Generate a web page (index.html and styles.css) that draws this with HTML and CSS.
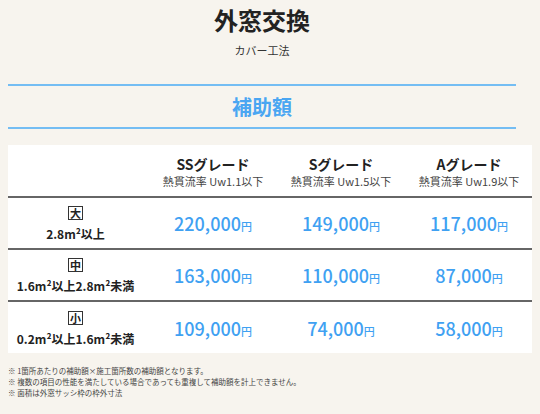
FILE: index.html
```html
<!DOCTYPE html>
<html lang="ja">
<head>
<meta charset="utf-8">
<title>外窓交換</title>
<link rel="stylesheet" href="styles.css">
</head>
<body>
<div class="page">
  <h1 class="title">外窓交換</h1>
  <p class="subtitle">カバー工法</p>
  <h2 class="section">補助額</h2>
  <table class="subsidy">
    <colgroup>
      <col class="c-label">
      <col class="c-grade">
      <col class="c-grade">
      <col class="c-grade">
    </colgroup>
    <thead>
      <tr>
        <th></th>
        <th><div class="grade">SSグレード</div><div class="uw">熱貫流率 Uw1.1以下</div></th>
        <th><div class="grade">Sグレード</div><div class="uw">熱貫流率 Uw1.5以下</div></th>
        <th><div class="grade">Aグレード</div><div class="uw">熱貫流率 Uw1.9以下</div></th>
      </tr>
    </thead>
    <tbody>
      <tr>
        <th><div class="size"><span class="box">大</span></div><div class="area">2.8m²以上</div></th>
        <td><span class="num">220,000</span><span class="yen">円</span></td>
        <td><span class="num">149,000</span><span class="yen">円</span></td>
        <td><span class="num">117,000</span><span class="yen">円</span></td>
      </tr>
      <tr>
        <th><div class="size"><span class="box">中</span></div><div class="area">1.6m²以上2.8m²未満</div></th>
        <td><span class="num">163,000</span><span class="yen">円</span></td>
        <td><span class="num">110,000</span><span class="yen">円</span></td>
        <td><span class="num">87,000</span><span class="yen">円</span></td>
      </tr>
      <tr>
        <th><div class="size"><span class="box">小</span></div><div class="area">0.2m²以上1.6m²未満</div></th>
        <td><span class="num">109,000</span><span class="yen">円</span></td>
        <td><span class="num">74,000</span><span class="yen">円</span></td>
        <td><span class="num">58,000</span><span class="yen">円</span></td>
      </tr>
    </tbody>
  </table>
  <ul class="notes">
    <li>※ 1箇所あたりの補助額×施工箇所数の補助額となります。</li>
    <li>※ 複数の項目の性能を満たしている場合であっても重複して補助額を計上できません。</li>
    <li>※ 面積は外窓サッシ枠の枠外寸法</li>
  </ul>
</div>
</body>
</html>
```

FILE: styles.css
```css
html, body {
  background: #f7f4ee;
}
body {
  margin: 0 8px;
  font-family: "Noto Sans CJK JP", "Noto Sans", sans-serif;
  color: #222;
}
.page {
  width: 508px;
}
.title {
  margin: 0;
  height: 40px;
  line-height: 40px;
  font-size: 24px;
  font-weight: 700;
  text-align: center;
  color: #222;
}
.subtitle {
  margin: 2px 0 0;
  line-height: 16px;
  font-size: 11px;
  text-align: center;
  color: #333;
}
.section {
  margin: 26px 0 0;
  border-top: 2px solid #74bdf3;
  border-bottom: 2px solid #74bdf3;
  line-height: 41px;
  font-size: 20px;
  font-weight: 700;
  text-align: center;
  color: #4aa6f2;
}
.subsidy {
  margin-top: 16px;
  width: 525px;
  table-layout: fixed;
  border-collapse: collapse;
  background: #fff;
}
.c-label { width: 141px; }
.c-grade { width: 128px; }
.subsidy th, .subsidy td {
  padding: 0;
  text-align: center;
  vertical-align: middle;
}
.subsidy thead th {
  height: 51px;
  padding: 0;
  vertical-align: top;
}
.subsidy thead tr,
.subsidy tbody tr {
  border-bottom: 2px solid #666;
}
.subsidy tbody tr:last-child {
  border-bottom: 0;
}
.subsidy tbody tr {
  height: 52px;
}
.grade {
  margin-top: 10px;
  line-height: 18px;
  font-size: 14px;
  font-weight: 700;
  color: #222;
}
.uw {
  margin-top: 1px;
  line-height: 15px;
  font-size: 11px;
  font-weight: 400;
  color: #444;
}
.subsidy tbody th {
  padding-right: 6px;
}
.size {
  line-height: 15px;
}
.box {
  display: inline-block;
  border: 1px solid #333;
  padding: 0 1px;
  line-height: 12px;
  font-size: 11px;
  font-weight: 700;
  color: #222;
}
.area {
  margin-top: 6px;
  line-height: 16px;
  font-size: 12px;
  font-weight: 700;
  color: #222;
}
.num {
  font-size: 18px;
  font-weight: 500;
  color: #3fa1f2;
}
.yen {
  font-size: 11px;
  font-weight: 500;
  color: #3fa1f2;
}
.notes {
  list-style: none;
  margin: 12px 0 0;
  padding: 0;
  font-size: 7.5px;
  line-height: 11px;
  color: #444;
}
```
